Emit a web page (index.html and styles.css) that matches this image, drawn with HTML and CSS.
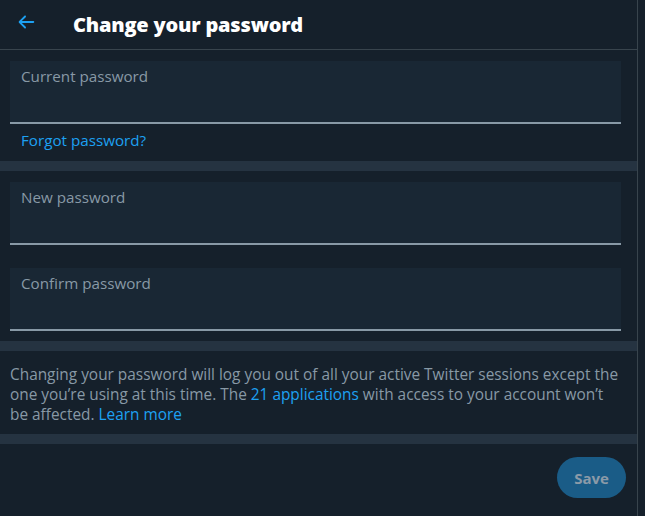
FILE: index.html
```html
<!DOCTYPE html>
<html lang="en">
<head>
<meta charset="utf-8">
<title>Change your password</title>
<link rel="stylesheet" href="styles.css">
</head>
<body>
<div class="column">
  <header class="header">
    <button class="back" aria-label="Back">
      <svg viewBox="0 0 24 24" width="22" height="22"><path d="M20 11H7.414l4.293-4.293c.39-.39.39-1.023 0-1.414s-1.023-.39-1.414 0l-6 6c-.39.39-.39 1.023 0 1.414l6 6c.195.195.45.293.707.293s.512-.098.707-.293c.39-.39.39-1.023 0-1.414L7.414 13H20c.553 0 1-.447 1-1s-.447-1-1-1z"/></svg>
    </button>
    <h1 class="title">Change your password</h1>
  </header>

  <section class="group">
    <label class="field"><span class="label">Current password</span></label>
    <a class="link forgot" href="#">Forgot password?</a>
  </section>
  <div class="sep"></div>

  <section class="group group-two">
    <label class="field"><span class="label">New password</span></label>
    <label class="field"><span class="label">Confirm password</span></label>
  </section>
  <div class="sep"></div>

  <p class="note">Changing your password will log you out of all your active Twitter sessions except the one you’re using at this time. The <a class="link" href="#">21 applications</a> with access to your account won’t be affected. <a class="link" href="#">Learn more</a></p>
  <div class="sep"></div>

  <div class="actions">
    <button class="save">Save</button>
  </div>
</div>
</body>
</html>
```

FILE: styles.css
```css
* { box-sizing: border-box; }
html, body { margin: 0; padding: 0; background: #15202b; height: 100%; }
body {
  font-family: "Open Sans", "Noto Sans", sans-serif;
  color: #8899a6;
}
.column {
  width: 638px;
  min-height: 516px;
  border-right: 1px solid #38444d;
}
.header {
  height: 50px;
  border-bottom: 1px solid #38444d;
  display: flex;
  align-items: center;
}
.back {
  background: none;
  border: 0;
  padding: 0;
  margin-left: 15px;
  width: 22px;
  height: 22px;
  margin-top: -5px;
  display: flex;
}
.back svg { fill: #1da1f2; }
.title {
  margin: -1px 0 0 36px;
  font-size: 20px;
  font-weight: 800;
  color: #ffffff;
  letter-spacing: -0.2px;
}
.group {
  padding: 11px 16px 0 10px;
  display: flex;
  flex-direction: column;
}
.group-two { gap: 23px; padding-bottom: 10px; }
.field {
  display: block;
  height: 63px;
  background: #192734;
  border-bottom: 2px solid #8899a6;
  padding: 4px 11px;
}
.label {
  font-size: 15.2px;
  color: #8899a6;
}
.link { color: #1da1f2; text-decoration: none; }
.forgot {
  font-size: 15.2px;
  line-height: 21px;
  padding: 6px 11px 10px;
}
.sep {
  height: 10px;
  background: #253341;
}
.note {
  margin: 0;
  padding: 14px 16px 9px 10px;
  font-size: 15.4px;
  line-height: 20px;
  color: #8899a6;
}
.actions {
  display: flex;
  justify-content: flex-end;
  padding: 13px 11px;
}
.save {
  width: 69px;
  height: 41px;
  border: 0;
  border-radius: 999px;
  background: #1a5c87;
  color: #8b9aa8;
  font-family: inherit;
  font-size: 15px;
  font-weight: 700;
}
```
